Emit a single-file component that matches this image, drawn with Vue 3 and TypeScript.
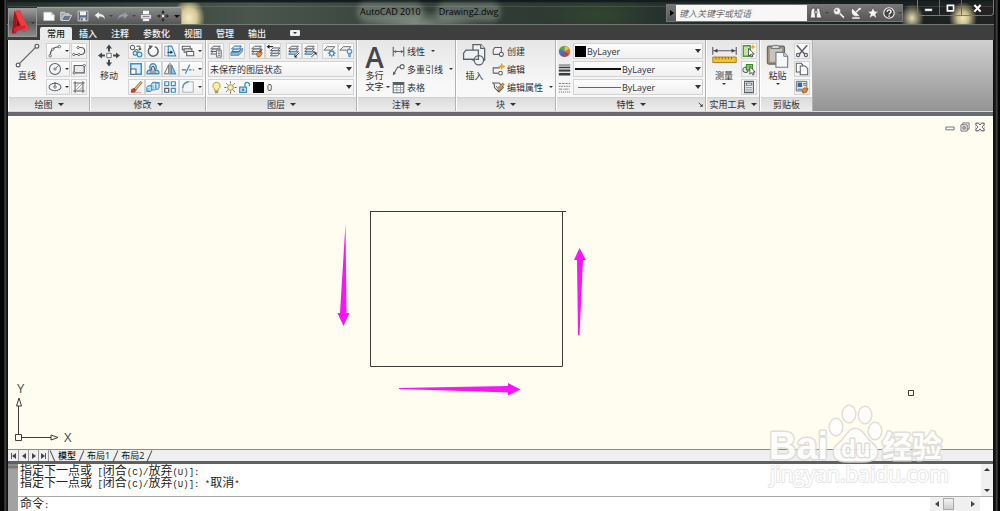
<script setup lang="ts">
import { h, ref } from 'vue'

const G = '#5b6066'
const B = '#3f8fc6'

const layers = (c: string) =>
  `<g fill="#eef1f3" stroke="${c}" stroke-width="1.1"><path d="M2 11.5h8l3-3H5z"/><path d="M2 8.500h8l3-3H5z"/><path d="M2 5.500h8l3-3H5z"/></g>`

const icons: Record<string, string> = {
  line: `<g stroke="${G}" stroke-width=".8" fill="#fff"><path d="M2 14 14 2"/><circle cx="2" cy="14" r="1.200"/><circle cx="14" cy="2" r="1.200"/></g>`,
  arc: `<path d="M2.500 13.500C2.500 7 6 3.500 12.500 3" fill="none" stroke="${G}" stroke-width="1.300"/><g fill="#fff" stroke="${G}"><circle cx="2.500" cy="13.500" r="1.400"/><circle cx="5.500" cy="6" r="1.300"/><circle cx="13" cy="3" r="1.400"/></g>`,
  circle: `<circle cx="8" cy="8" r="6.300" fill="#f4f5f6" stroke="${G}" stroke-width="1.200"/><path d="M8 8l4-4" stroke="${G}"/><circle cx="8" cy="8" r="1.300" fill="#fff" stroke="${G}"/>`,
  ellipse: `<ellipse cx="8" cy="8" rx="6.800" ry="4.200" fill="#f4f5f6" stroke="${G}" stroke-width="1.200"/><path d="M8 8V3" stroke="${G}"/><circle cx="8" cy="8" r="1.400" fill="#fff" stroke="${G}"/><circle cx="8" cy="3.500" r="1" fill="${G}"/>`,
  polyline: `<path d="M2 12h8.500a4 4 0 0 0 0-8H7" fill="none" stroke="${G}" stroke-width="1.400"/><g fill="#fff" stroke="${G}"><circle cx="2" cy="12" r="1.300"/><circle cx="8" cy="12" r="1.300"/><circle cx="7" cy="4" r="1.300"/></g>`,
  rect: `<path d="M2.500 4h11.500v8.500H2.500z" fill="#e8eaec" stroke="${G}" stroke-width="1.300"/><g fill="#fff" stroke="${G}"><circle cx="2.500" cy="12.500" r="1.300"/><circle cx="14" cy="4" r="1.300"/></g>`,
  hatch: `<path d="M3.500 1.500v13M12.500 1.500v13M1.500 3.500h13M1.500 12.500h13" stroke="${G}" stroke-width="1.200"/><path d="M4 8l4-4M4 12l8-8M8 12l4-4" stroke="#8c9297" stroke-width="1"/>`,
  move: `<path d="M8 0l2.200 2.900H8.700V5H7.300V2.900H5.800zM8 16l2.200-2.900H8.700V11H7.300v2.100H5.800zM0 8l2.900 2.200V8.700H5V7.300H2.900V5.800zM16 8l-2.900 2.200V8.700H11V7.300h2.100V5.800z" fill="#41464b"/><path d="M6.400 6.400h3.200v3.200H6.400z" fill="#fff" stroke="#6a6f74" stroke-width=".7"/>`,
  copy: `<g fill="#f6f7f8" stroke="${G}" stroke-width="1.200"><circle cx="4" cy="4" r="2.500"/><circle cx="8.500" cy="8.300" r="2"/></g><g fill="#dff0fb" stroke="${B}" stroke-width="1.400"><circle cx="7" cy="10.500" r="2.200"/><circle cx="12" cy="12" r="2.700"/></g><path d="M8.500 2.500h4v3" fill="none" stroke="#333"/><path d="M10.500 5h4l-2 2.500z" fill="#333"/>`,
  rotate: `<path d="M5.200 3.600A5.600 5.600 0 1 0 10 3" fill="none" stroke="${G}" stroke-width="1.700"/><path d="M3 1.500l5 .5-3 4z" fill="${G}"/>`,
  stretch: `<path d="M2 2.500h5v11H2z" fill="#f4f5f6" stroke="#9a9ea2"/><path d="M6 2.500h4l4.500 11H6z" fill="#d9ecf8" stroke="${B}" stroke-width="1.300"/><path d="M5 9.500h5" stroke="#222"/><path d="M8.500 7.500l3 2-3 2z" fill="#222"/>`,
  array2: `<g stroke="${G}" stroke-width="1.200"><path d="M1.500 2.500h9v4h-9z" fill="#f2f3f4"/><path d="M3.500 5.500h9v4h-9z" fill="#d4d7da"/><path d="M6.500 8.500h8v5h-8z" fill="#f6f7f8"/></g>`,
  scale: `<path d="M2 2h12v12H2z" fill="#d9ecf8" stroke="${B}" stroke-width="1.700"/><path d="M2 8h6v6H2z" fill="#fff" stroke="${G}" stroke-width="1.200"/>`,
  offset: `<path d="M1.500 13.500c-1-3 1-4.500 3.500-4C3.500 5 5 2 8 2s4.500 3 3 7.500c2.500-.5 4.500 1 3.500 4z" fill="#d9ecf8" stroke="${B}" stroke-width="1.600"/><path d="M4 11.500h8M7 10C5.500 7 6.500 5 8 5s2.500 2 1 5" fill="none" stroke="${G}" stroke-width="1.200"/>`,
  mirror: `<path d="M6.500 3v10.500h-5z" fill="#f0f1f2" stroke="${G}"/><path d="M9.500 3v10.500h5z" fill="#8fc4e8" stroke="${B}" stroke-width="1.300"/><path d="M8 1v14" stroke="${G}"/>`,
  trim: `<path d="M1 9h5" stroke="${G}" stroke-width="1.300"/><path d="M9 9h6" stroke="${B}" stroke-width="1.500" stroke-dasharray="3 1.500"/><path d="M5 13.500 10 3" stroke="${B}" stroke-width="1.400"/>`,
  erase: `<path d="M6 10 13.500 1.500l1.500 1.500-7 8.500z" fill="#e3bd7d" stroke="#6b4d22" stroke-width=".8"/><path d="M2.500 10.500l3-1.500 3 2.500-2 3H2z" fill="#c5422b"/><path d="M7 14.500h7" stroke="#d79a88"/>`,
  explode: `<g fill="#9fd0f0" stroke="${B}" stroke-width="1.200"><path d="M1 8.500l2-2h3.500v4.500l-1.500 2H1z"/><path d="M6 5l2-2.500h3.500v7l-1.500 2H6z"/><path d="M11 5l1.500-2H15v5.500l-1.500 2H11z"/></g><path d="M1.500 8.500h3.500v4M6.500 5h3.500v6M11 5h2.500v5" fill="none" stroke="#eaf5fc" stroke-width=".9"/>`,
  array: `<g fill="#f7f8f9" stroke-width="1.400"><path d="M2 9.500h4.500V14H2z" stroke="${G}"/><path d="M2 2h4.500v4.500H2zM9.500 2H14v4.500H9.500zM9.500 9.500H14V14H9.500z" stroke="${B}"/></g>`,
  fillet: `<path d="M2 14V9C2 5 5 2 9 2h5v12z" fill="#f4f5f6"/><path d="M2 9C2 5 5 2 9 2" fill="none" stroke="${B}" stroke-width="1.600"/><path d="M2 9v5h12M9 2h5v12" fill="none" stroke="#a4a8ac"/>`,
  layerProps: layers(G) + `<path d="M8.500 7H14v8H8.500z" fill="#fff" stroke="${G}"/><path d="M10 9h3M10 11h3M10 13h3" stroke="${G}"/>`,
  layerCurrent: layers(G) + `<path d="M2 5.500h8l3-3H5z" fill="#d9ecf8" stroke="${B}"/><path d="M1 9.500h9l4.500-5v3.500l-4.500 5H1z" fill="#7dbbe6" stroke="#2f6f9f" stroke-width=".7"/>`,
  layerMatch: layers(G) + `<path d="M7 11l3-2 4 1-2 4-3 1z" fill="#e8962e" stroke="#8a4b16" stroke-width=".8"/><path d="M11 9l3-3" stroke="#8a4b16" stroke-width="1.500"/>`,
  layerPrev: `<g transform="translate(3 2)">${layers(G)}</g><path d="M2 3h6" stroke="#222" stroke-width="1.300"/><path d="M4 .5v5L.500 3z" fill="#222"/>`,
  layerIso: layers(G) + `<path d="M2 11.500h8l3-3H5z" fill="#9fd0f0" stroke="${B}"/><path d="M14 10l-4 4" stroke="#222"/><path d="M8.500 12v3.500H12z" fill="#222"/>`,
  layerUniso: layers(G) + `<path d="M2 11.500h8l3-3H5z" fill="#9fd0f0" stroke="${B}"/><path d="M9.500 15l4-4" stroke="#222"/><path d="M12 9.500h3.500V13z" fill="#222"/>`,
  layerFreeze: `<path d="M1 7h9l3.500-4H5z" fill="#eef1f3" stroke="${G}"/><g stroke="${B}" stroke-width="1.300" fill="#fff"><circle cx="10" cy="10.500" r="2.400"/><path d="M10 6v2M10 13v2M5.500 10.500h2M12.500 10.500h2M7 7.500l1.300 1.300M11.800 12.300l1.300 1.300M13 7.500l-1.300 1.300M8.200 12.300 7 13.600"/></g>`,
  layerOff: `<path d="M1 7h9l3.500-4H5z" fill="#eef1f3" stroke="${G}"/><circle cx="12" cy="8.500" r="2.600" fill="#d6ebfa" stroke="${B}" stroke-width="1.200"/><path d="M11 11h2v3.500h-2z" fill="#7dbbe6" stroke="${B}" stroke-width=".8"/>`,
  bulb: `<path d="M8 1.500a4.500 4.500 0 0 0-2.200 8.400V12h4.400V9.900A4.500 4.500 0 0 0 8 1.500z" fill="#fdf0a0" stroke="#a98a2c"/><path d="M6 12.500h4v2.500H6z" fill="#8b8f94"/>`,
  sun: `<circle cx="8" cy="8" r="3.500" fill="#fdf0a0" stroke="#8f7630"/><g stroke="#6f6440" stroke-width="1.200"><path d="M8 .5v2.500M8 13v2.500M.5 8H3M13 8h2.500M2.700 2.700l1.800 1.800M11.500 11.500l1.800 1.800M13.300 2.700l-1.800 1.800M4.500 11.500l-1.800 1.800"/></g>`,
  lock: `<path d="M8.500 8V4.500a2.800 2.800 0 0 1 5.600 0V6" fill="none" stroke="${B}" stroke-width="1.600"/><path d="M2 7.500h8.500V14H2z" fill="#b8dcf3" stroke="${B}" stroke-width="1.400"/><path d="M6.200 9.500v2.500" stroke="#222" stroke-width="1.500"/>`,
  dim: `<path d="M1.500 2v12M14.500 2v12M2 8h12" stroke="${G}" stroke-width="1.300" fill="none"/><path d="M2 8l3-2v4zM14 8l-3-2v4z" fill="${G}"/>`,
  leader: `<path d="M2.500 13 7 5h3" fill="none" stroke="${G}" stroke-width="1.400"/><path d="M1 15.500l.500-5 3.500 2z" fill="${G}"/><circle cx="12.500" cy="4.500" r="2.500" fill="#fff" stroke="${G}" stroke-width="1.300"/>`,
  table: `<path d="M1.500 2h13v12.500h-13z" fill="#fff" stroke="${G}" stroke-width="1.300"/><path d="M1.500 2h13v3h-13z" fill="${G}"/><path d="M1.500 8h13M1.500 11h13M6 5v9.500M10.500 5v9.500" stroke="#8c9297"/>`,
  insert: `<g fill="#eef0f2" stroke="${G}" stroke-width=".8"><path d="M7 1h5l2.500 2.500V11H7z"/><path d="M12 1v2.500h2.500" fill="#fff"/><path d="M1 10.500v-4l1.500-2h8v6z"/><circle cx="10.800" cy="11" r="3"/></g><path d="M1 10.500h7M10.500 8v2.500h-2" stroke="${G}" stroke-width=".8" fill="none"/>`,
  create: `<path d="M1.500 11.500v-5.500l2-3h8v7.500" fill="#f2f3f4" stroke="${G}" stroke-width="1.300"/><path d="M1.500 11.500h7" stroke="${G}" stroke-width="1.500"/><circle cx="11.500" cy="11.500" r="2.500" fill="#fff" stroke="${G}" stroke-width="1.300"/>`,
  edit: `<path d="M1.500 12.500V6h8" fill="#f2f3f4" stroke="${G}" stroke-width="1.300"/><path d="M1.500 12.500h6" stroke="${G}" stroke-width="1.500"/><circle cx="10.500" cy="12.500" r="2.300" fill="#fff" stroke="${G}" stroke-width="1.300"/><path d="M12 .500l1.200 2.500 2.600 1.200-2.600 1.200L12 8l-1.200-2.600L8.200 4.200l2.600-1.200z" fill="#f5a623" stroke="#d9821a" stroke-width=".5"/>`,
  attr: `<path d="M1 2.500h8L14 8l-5.500 5.500L3 8V4.500z" fill="#f2f3f4" stroke="${G}" stroke-width="1.300"/><path d="M5 6l2 3 2-3" fill="none" stroke="${G}"/><path d="M7.500 10.500 13 2.500l2 1.500-5.500 7.500-2.500 1z" fill="#efa83e" stroke="#7d4d16" stroke-width=".8"/>`,
  wheel: `<circle cx="8" cy="8" r="7" fill="#888"/><path d="M8 8V1.500A6.500 6.500 0 0 1 13.600 4.800z" fill="#f2c43a"/><path d="M8 8l5.600-3.200a6.500 6.500 0 0 1 0 6.400z" fill="#e4702f"/><path d="M8 8l5.600 3.200A6.500 6.500 0 0 1 8 14.500z" fill="#c93a3a"/><path d="M8 8v6.500a6.500 6.500 0 0 1-5.600-3.300z" fill="#7b4fa8"/><path d="M8 8l-5.600 3.200a6.500 6.500 0 0 1 0-6.400z" fill="#3c78c8"/><path d="M8 8 2.400 4.800A6.500 6.500 0 0 1 8 1.500z" fill="#58a744"/>`,
  weight: `<path d="M1 2.500h14" stroke="#3a3d42" stroke-width="1"/><path d="M1 5.500h14" stroke="#3a3d42" stroke-width="2"/><path d="M1 9.300h14" stroke="#3a3d42" stroke-width="2.600"/><path d="M1 13.800h14" stroke="#3a3d42" stroke-width="3.200"/>`,
  ltype: `<g stroke="#777b80" stroke-width="1.200"><path d="M1 3h14" stroke-dasharray="3 1"/><path d="M1 6.500h14" stroke-dasharray="2 1"/><path d="M1 10h14" stroke-dasharray="4 1 1 1"/><path d="M1 13.500h14" stroke-dasharray="1.500 1"/></g>`,
  measure: `<path d="M.5 2.500v5M15.500 2.500v5M1 5h14" stroke="#555a60" stroke-width=".7"/><path d="M1 5l2.500-1.300v2.600zM15 5l-2.500-1.300v2.600z" fill="#444"/><path d="M.5 9h15v3.500H.5z" fill="#f3c233" stroke="#a87c13" stroke-width=".6"/><path d="M2.500 9v1.500M4.500 9v1.500M6.500 9v1.500M8.500 9v1.500M10.500 9v1.500M12.500 9v1.500" stroke="#7d5c10" stroke-width=".5"/>`,
  qselect: `<path d="M1.500 2h8v12h-8z" fill="#bfe3a9" stroke="#4d9a3a" stroke-width="1.500"/><path d="M7.500 5v9l2-2 1.500 3 1.500-1-1.500-2.500H14z" fill="#fff" stroke="#444"/><path d="M12.500 0l1 2.300L15.800 3.300l-2.300 1-1 2.300-1-2.300-2.300-1 2.300-1z" fill="#f5a623"/>`,
  select: `<circle cx="4" cy="9" r="3" fill="#e8f3e2" stroke="${G}" stroke-width="1.200"/><path d="M5 3h7v6H5z" fill="#8fce74" stroke="#3f8a2e" stroke-width="1.300"/><path d="M9 5v9l2-2 1.500 3 1.500-1-1.500-2.500H15z" fill="#fff" stroke="#444"/>`,
  calc: `<path d="M3 1.500h10v13H3z" fill="#f2f3f4" stroke="${G}" stroke-width="1.300"/><path d="M5 3.500h6v2.500H5z" fill="#fff" stroke="${G}"/><path d="M5 8.500h6M5 10.500h6M5 12.500h6" stroke="${G}" stroke-width="1.200" stroke-dasharray="1.300 1"/>`,
  paste: `<rect x="1.500" y="2" width="11" height="11.500" rx="1" fill="#9b9080" stroke="#6a6258" stroke-width=".7"/><path d="M3 3.500h8v8.500H3z" fill="#c9c4ba"/><path d="M4 3.500c0-1.500 1-1 1.500-2h2.500c.5 1 1.500.5 1.500 2z" fill="#d6d8da" stroke="#6a6f74" stroke-width=".6"/><path d="M7 6h5l2.500 2.500v7H7z" fill="#f5f8fb" stroke="#6f7880" stroke-width=".7"/><path d="M12 6v2.500h2.500" fill="#d4dde5" stroke="#6f7880" stroke-width=".6"/>`,
  cut: `<path d="M2 1.500 11.500 12M14 1.500 4.500 12" stroke="${G}" stroke-width="1.700"/><g fill="#fff" stroke="${G}" stroke-width="1.400"><circle cx="3.500" cy="12.500" r="1.800"/><circle cx="12.500" cy="12.500" r="1.800"/></g>`,
  copyclip: `<path d="M1.500 1.500h5.500l2 2v8H1.500z" fill="#fff" stroke="${G}" stroke-width="1.200"/><path d="M6 4.500h5.500l3 3v7H6z" fill="#fff" stroke="${G}" stroke-width="1.200"/>`,
  match: `<path d="M1.500 1.500h12v11h-12z" fill="#dfe6ee" stroke="${G}"/><path d="M3 3h5v5H3z" fill="#2d6da3"/><path d="M9.500 4h3M9.500 6h3M3 10.500h5" stroke="${G}"/><path d="M8 11l3-2 4 1-2 4-4 1z" fill="#e8862e" stroke="#8a4b16" stroke-width=".8"/>`,
  new: `<path d="M1 3h10l4 4v7H1z" fill="#fafafa" stroke="#d2d2d2" stroke-width=".8"/><path d="M11 3v4h4z" fill="#bfc3c7"/>`,
  open: `<path d="M1 14V3h5l1 2h5v2" fill="#9ea6ae" stroke="#e3e6e9" stroke-width="1.100"/><path d="M2 14l3-7h10.500l-3.500 7z" fill="#6d7782" stroke="#e3e6e9" stroke-width="1.100"/>`,
  save: `<path d="M1.500 1.500h13v13h-13z" fill="#5d6e80" stroke="#e0e4e8"/><path d="M4 2h8v5H4z" fill="#f2f2f2"/><path d="M4.500 10h7v4.500h-7z" fill="#d5d9dd"/><path d="M5.500 11h2v3h-2z" fill="#4a5663"/>`,
  undo: `<path d="M7 1.500v3.300c5 0 8 2.700 8 8.700-1.500-3.500-4-4.500-8-4.500v3.500L.500 7z" fill="#eceff2" stroke="#575b60" stroke-width=".7"/>`,
  redo: `<path d="M9 1.500v3.300c-5 0-8 2.700-8 8.700 1.500-3.500 4-4.500 8-4.500v3.500L15.500 7z" fill="#9c9fa2" stroke="#66696c" stroke-width=".7"/>`,
  print: `<path d="M4 1h8v5H4z" fill="#fff"/><path d="M1 6h14v6H1z" fill="#e6e8ea" stroke="#5a5d60" stroke-width=".6"/><path d="M3.500 8.500h9" stroke="#555"/><path d="M3.500 11h9v4h-9z" fill="#fff" stroke="#666" stroke-width=".7"/>`,
  pan: `<path d="M8 0l2.500 3.500h-1.700V6H7.200V3.500H5.500zM8 16l2.500-3.500h-1.700V10H7.200v2.500H5.500zM0 8l3.500 2.500V8.800H6V7.200H3.500V5.500zM16 8l-3.500 2.500V8.800H10V7.200h2.500V5.500z" fill="#26292c"/><path d="M6.500 6.500h3v3h-3z" fill="#eee"/>`,
  find: `<path d="M3 1.500h3.500v3.500l1 9.500H.5l1-9.500zM9.500 1.500H13v3.500l2.500 9.500H8.500V5z" fill="#f4f4f4" stroke="#333" stroke-width=".8"/><path d="M6.500 5h3v4h-3z" fill="#d0d0d0" stroke="#333" stroke-width=".6"/>`,
  key: `<path d="M7 8.500l7 7 1.500-2.500L9 6.500z" fill="#eee" stroke="#333" stroke-width=".5"/><circle cx="5.500" cy="5.500" r="4.700" fill="#f2f2f2" stroke="#333" stroke-width=".5"/><circle cx="4.500" cy="4.500" r="1.300" fill="#555"/>`,
  dish: `<path d="M3 1.500l10 10c-4 2-8 1-10-2s-1-6 0-8z" fill="#f4f4f4" stroke="#333" stroke-width=".6"/><path d="M8 7l5-5M3 14.500h10" stroke="#f4f4f4" stroke-width="2"/><circle cx="13" cy="2.500" r="1.500" fill="#f4f4f4"/>`,
  star: `<path d="M8 .5l2.300 5.200h5.400l-4.300 3.500L13 15.300 8 11.800l-5 3.500 1.600-6.100L.3 5.700h5.400z" fill="#f4f4f4" stroke="#333" stroke-width=".6"/>`,
  help: `<circle cx="8" cy="8" r="7" fill="#444" stroke="#f4f4f4" stroke-width="1.500"/><path d="M5.500 6.200C5.500 3 10.700 3 10.700 6.200 10.700 8 8.200 8 8.200 10" fill="none" stroke="#fff" stroke-width="1.900"/><circle cx="8.200" cy="12.200" r="1.100" fill="#fff"/>`,
  minimize: `<path d="M2.500 8h11v4h-11z" fill="#fff" stroke="#222" stroke-width=".8"/>`,
  maximize: `<path d="M3.500 3.500h9v8h-9z" fill="none" stroke="#222" stroke-width="4"/><path d="M3.500 3.500h9v8h-9z" fill="none" stroke="#fff" stroke-width="2.500"/>`,
  close: `<path d="M3.500 3l9 9.500M12.500 3l-9 9.500" stroke="#fff" stroke-width="3"/>`,
  docMin: `<path d="M1.500 8h13v4.500h-13z" fill="#fff" stroke="#666" stroke-width="1.400"/>`,
  docRestore: `<path d="M4.500 1.500h10v10h-10z" fill="#fff" stroke="#666" stroke-width="1.400"/><path d="M1.500 4.500h10v10h-10z" fill="#fff" stroke="#666" stroke-width="1.400"/><path d="M4.500 7.500h4v4h-4z" fill="#ccc" stroke="#666" stroke-width="1.300"/>`,
  docClose: `<path d="M1 1.500h14v13H1z" fill="none" stroke="#999" stroke-width=".8"/><path d="M1.500 2h3.800L8 5l2.700-3h3.800v2.500L11 8l3.500 3.500V14h-3.800L8 11l-2.700 3H1.500v-2.500L5 8 1.500 4.500z" fill="#fff" stroke="#555" stroke-width="1.500"/>`,
  launcher: `<path d="M4 4l7 7" stroke="#333" stroke-width="2"/><path d="M13 6v7H6z" fill="#333"/>`,
}

const Icon = (p: { name: string }) =>
  h('svg', { class: 'icon', viewBox: '0 0 16 16', 'aria-hidden': 'true', innerHTML: icons[p.name] })

interface Tool { icon: string; label: string; menu?: boolean }
const t = (icon: string, label: string, menu = false): Tool => ({ icon, label, menu })

const tabs = ['常用', '插入', '注释', '参数化', '视图', '管理', '输出']
const activeTab = ref('常用')

const quick: Tool[] = [
  t('new', '新建'), t('open', '打开'), t('save', '保存'), t('undo', '放弃', true),
  t('redo', '重做', true), t('print', '打印'), t('pan', '平移'),
]
const infoTools: Tool[] = [
  t('find', '搜索', true), t('key', '速博应用中心'), t('dish', '通讯中心'), t('star', '收藏夹'), t('help', '帮助', true),
]
const drawLeft = [t('arc', '圆弧', true), t('circle', '圆', true), t('ellipse', '椭圆', true)]
const drawRight = [t('polyline', '多段线'), t('rect', '矩形'), t('hatch', '图案填充')]
const modifyGrid = [
  t('copy', '复制'), t('rotate', '旋转'), t('stretch', '拉伸'),
  t('scale', '缩放'), t('offset', '偏移'), t('mirror', '镜像'),
  t('erase', '删除'), t('explode', '分解'), t('array', '阵列'),
]
const modifyRight = [t('array2', '前置', true), t('trim', '修剪', true), t('fillet', '圆角', true)]
const layerGroups = [
  [t('layerProps', '图层特性')], [t('layerCurrent', '置为当前')],
  [t('layerMatch', '匹配'), t('layerPrev', '上一个')],
  [t('layerIso', '隔离'), t('layerUniso', '取消隔离')],
  [t('layerFreeze', '冻结'), t('layerOff', '关闭')],
]
const annotate = [t('dim', '线性', true), t('leader', '多重引线', true), t('table', '表格')]
const block = [t('create', '创建'), t('edit', '编辑'), t('attr', '编辑属性', true)]
const utils = [t('qselect', '快速选择'), t('select', '全部选择'), t('calc', '计算器')]
const clip = [t('cut', '剪切'), t('copyclip', '复制'), t('match', '特性匹配')]

const layouts = ['模型', '布局1', '布局2']
const activeLayout = ref('模型')
const command = ref('')
</script>

<template>
  <div class="window">
    <header class="head">
      <div class="caption">
        <div class="quick">
          <button v-for="q in quick" :key="q.icon" :class="['flat', { wide: q.menu }]" :aria-label="q.label">
            <Icon :name="q.icon" /><i v-if="q.menu" class="caret dim"></i>
          </button>
          <button class="flat more" aria-label="自定义"><i class="caret big"></i></button>
        </div>
        <h1 class="title"><span>AutoCAD 2010</span><span>Drawing2.dwg</span></h1>
        <div class="info">
          <button class="play" aria-label="展开"><i class="tri-right"></i></button>
          <input class="search" type="text" placeholder="键入关键字或短语" aria-label="键入关键字或短语" />
          <button v-for="q in infoTools" :key="q.icon" :class="['flat', { wide: q.menu }]" :aria-label="q.label">
            <Icon :name="q.icon" /><i v-if="q.menu" class="caret dim"></i>
          </button>
        </div>
        <div class="winctl">
          <button aria-label="最小化"><Icon name="minimize" /></button>
          <button aria-label="最大化"><Icon name="maximize" /></button>
          <button class="x" aria-label="关闭"><Icon name="close" /></button>
        </div>
      </div>
      <nav class="tabs">
        <button v-for="n in tabs" :key="n" :class="['tab', { on: n === activeTab }]" @click="activeTab = n">{{ n }}</button>
        <button class="pill" aria-label="最小化功能区"><i class="caret"></i></button>
      </nav>
      <button class="app" aria-label="应用程序菜单">
        <svg class="logo" viewBox="0 0 20 25" aria-hidden="true">
          <path d="M4.500 1 10 .5 18.500 19 14 22 12.500 19 7 21 6 23.500 2 23.500z" fill="#cf1f28" />
          <path d="M4.500 1 7 4 5.500 22 2 23.500z" fill="#a3131c" />
          <path d="M4.500 1 10 .5 18.500 19 14 22z" fill="#ee3f43" />
          <path d="M7 9l3 6-3.500 1.500z" fill="#6a0c13" />
          <path d="M4 18l11-3 1 3-12 4z" fill="#d8262e" />
        </svg>
        <i class="caret"></i>
      </button>
    </header>

    <section class="ribbon">
      <div class="panel draw">
        <div class="body">
          <button class="large"><Icon name="line" /><span>直线</span></button>
          <div class="col">
            <button v-for="q in drawLeft" :key="q.icon" class="tool split" :aria-label="q.label"><Icon :name="q.icon" /><i class="caret"></i></button>
          </div>
          <div class="col">
            <button v-for="q in drawRight" :key="q.icon" class="tool" :aria-label="q.label"><Icon :name="q.icon" /></button>
          </div>
        </div>
        <button class="foot">绘图<i class="caret big"></i></button>
      </div>

      <div class="panel modify">
        <div class="body">
          <button class="large"><Icon name="move" /><span>移动</span></button>
          <div class="grid3">
            <button v-for="q in modifyGrid" :key="q.icon" class="tool" :aria-label="q.label"><Icon :name="q.icon" /></button>
          </div>
          <div class="col">
            <button v-for="q in modifyRight" :key="q.icon" class="tool split" :aria-label="q.label"><Icon :name="q.icon" /><i class="caret"></i></button>
          </div>
        </div>
        <button class="foot">修改<i class="caret big"></i></button>
      </div>

      <div class="panel layer">
        <div class="body stack">
          <div class="groups">
            <div v-for="(g, i) in layerGroups" :key="i" class="group">
              <button v-for="q in g" :key="q.icon" class="tool" :aria-label="q.label"><Icon :name="q.icon" /></button>
            </div>
          </div>
          <div class="combo">
            <select aria-label="图层状态"><option>未保存的图层状态</option></select>
          </div>
          <div class="combo">
            <span class="deco"><Icon name="bulb" /><Icon name="sun" /><Icon name="lock" /><b class="swatch"></b></span>
            <select class="pad-layer" aria-label="图层"><option>0</option></select>
          </div>
        </div>
        <button class="foot">图层<i class="caret big"></i></button>
      </div>

      <div class="panel annot">
        <div class="body">
          <button class="large text"><b class="letter">A</b><span>多行</span><span class="two">文字<i class="caret"></i></span></button>
          <div class="col">
            <button v-for="q in annotate" :key="q.icon" class="row"><Icon :name="q.icon" />{{ q.label }}<i v-if="q.menu" class="caret"></i></button>
          </div>
        </div>
        <button class="foot">注释<i class="caret big"></i></button>
      </div>

      <div class="panel block">
        <div class="body">
          <button class="large"><Icon name="insert" /><span>插入</span></button>
          <div class="col">
            <button v-for="q in block" :key="q.icon" class="row"><Icon :name="q.icon" />{{ q.label }}<i v-if="q.menu" class="caret"></i></button>
          </div>
        </div>
        <button class="foot">块<i class="caret big"></i></button>
      </div>

      <div class="panel props">
        <div class="body stack">
          <div class="prop">
            <Icon name="wheel" />
            <div class="combo">
              <span class="deco"><b class="swatch"></b></span>
              <select class="pad-color" aria-label="颜色"><option>ByLayer</option></select>
            </div>
          </div>
          <div class="prop">
            <Icon name="weight" />
            <div class="combo">
              <span class="deco"><b class="stroke"></b></span>
              <select class="pad-line" aria-label="线宽"><option>ByLayer</option></select>
            </div>
          </div>
          <div class="prop">
            <Icon name="ltype" />
            <div class="combo">
              <span class="deco"><b class="stroke thin"></b></span>
              <select class="pad-line" aria-label="线型"><option>ByLayer</option></select>
            </div>
          </div>
        </div>
        <div class="foot">特性<i class="caret big"></i><button class="launch" aria-label="特性选项板"><Icon name="launcher" /></button></div>
      </div>

      <div class="panel util">
        <div class="body">
          <button class="large"><Icon name="measure" /><span>测量</span><i class="caret"></i></button>
          <div class="col">
            <button v-for="q in utils" :key="q.icon" class="tool" :aria-label="q.label"><Icon :name="q.icon" /></button>
          </div>
        </div>
        <button class="foot">实用工具<i class="caret big"></i></button>
      </div>

      <div class="panel clip">
        <div class="body">
          <button class="large"><Icon name="paste" /><span>粘贴</span><i class="caret"></i></button>
          <div class="col">
            <button v-for="q in clip" :key="q.icon" class="tool" :aria-label="q.label"><Icon :name="q.icon" /></button>
          </div>
        </div>
        <button class="foot">剪贴板</button>
      </div>
    </section>

    <main class="canvas">
      <svg class="drawing" role="img" aria-label="图形">
        <g fill="none" stroke="#3c3c38">
          <path d="M362.500 94.500V249.500H554.500V94.500M362 94.500H558" />
          <path d="M7.500 317.500h6v6h-6zM10.500 317V289M14 320.500h29" />
          <path d="M8.500 289h5l-2.500-8zM43 318v5l7-2.500z" />
          <path d="M900.500 273.500h5v5h-5z" />
        </g>
        <g fill="#f914f9">
          <path d="M337.500 107 338.500 196H341.500L335.500 209 329.500 196H332z" />
          <path d="M571.500 131 578 143H575L571.500 218H570L569 143H566z" />
          <path d="M391 271 500 269V266L512.500 272.500 500 278.500V275.500L391 272z" />
        </g>
        <g class="axis"><text x="9" y="276">Y</text><text x="56" y="325">X</text></g>
      </svg>
      <div class="docctl">
        <button aria-label="最小化图形"><Icon name="docMin" /></button>
        <button aria-label="还原图形"><Icon name="docRestore" /></button>
        <button aria-label="关闭图形"><Icon name="docClose" /></button>
      </div>
    </main>

    <nav class="layouts">
      <div class="steps">
        <button aria-label="第一个"><i class="bar"></i><i class="tri-left"></i></button>
        <button aria-label="上一个"><i class="tri-left"></i></button>
        <button aria-label="下一个"><i class="tri-right"></i></button>
        <button aria-label="最后一个"><i class="tri-right"></i><i class="bar"></i></button>
      </div>
      <button v-for="l in layouts" :key="l" :class="['sheet', { on: l === activeLayout }]" @click="activeLayout = l">{{ l }}</button>
    </nav>

    <section class="console">
      <div class="grip"></div>
      <div class="lines">
        <div class="history">
          <div class="log">
            <p>指定下一点或<code> [</code>闭合<code>(C)/</code>放弃<code>(U)]:</code></p>
            <p>指定下一点或<code> [</code>闭合<code>(C)/</code>放弃<code>(U)]: *</code>取消<code>*</code></p>
          </div>
          <div class="vbar"><button aria-label="向上"><i class="tri-up"></i></button><button aria-label="向下"><i class="caret big"></i></button></div>
        </div>
        <div class="prompt">
          <label for="cmd">命令<code>:</code></label>
          <input id="cmd" v-model="command" type="text" autocomplete="off" />
          <div class="hbar"><button aria-label="向左"><i class="tri-left"></i></button><b class="thumb"></b><button aria-label="向右"><i class="tri-right"></i></button></div>
        </div>
      </div>
    </section>

    <svg class="mark" viewBox="0 0 184 90" aria-label="Baidu 经验">
      <g fill="#fff" stroke="#dcdbd6" stroke-width="3" paint-order="stroke" stroke-linejoin="round">
        <text class="bai" x="4" y="57">Bai</text>
        <ellipse cx="71" cy="25" rx="6" ry="8" />
        <ellipse cx="84" cy="12" rx="6" ry="8" />
        <ellipse cx="100" cy="13" rx="6" ry="8" />
        <ellipse cx="110" cy="29" rx="6" ry="8" />
        <path d="M90 27c7 0 9 7 14 12 6 5 9 8 8 13-1 6-7 8-22 7-15 1-20-1-21-7-1-5 2-8 8-13 5-5 7-12 13-12z" />
        <text class="du" x="76" y="55">du</text>
        <text class="exp" x="117" y="55">经验</text>
      </g>
      <g fill="#fff" stroke="#e4e4e2" stroke-width="2" paint-order="stroke" stroke-linejoin="round">
        <text class="url" x="5" y="80">jingyan.baidu.com</text>
      </g>
    </svg>
  </div>
</template>

<style>
html,
body {
  margin: 0;
  background: #000;
}
</style>

<style scoped>
* {
  box-sizing: border-box;
}
.window {
  position: relative;
  display: flex;
  flex-direction: column;
  height: 100vh;
  overflow: hidden;
  padding: 0 7px 0 8px;
  background: linear-gradient(90deg, #050505 0, #050505 4px, #4c4f4e 5px, #111 7px, #111 calc(100% - 5px), #4a4d4c calc(100% - 3px), #050505 calc(100% - 2px));
  font-family: "Open Sans", "Noto Sans CJK SC", sans-serif;
  font-size: 9px;
  line-height: 11px;
  color: #303236;
}
button {
  display: flex;
  align-items: center;
  justify-content: center;
  margin: 0;
  padding: 0;
  border: 0;
  background: none;
  color: inherit;
  font: inherit;
  white-space: nowrap;
}
.icon {
  display: block;
  flex: none;
  width: 14px;
  height: 14px;
}
.caret {
  flex: none;
  width: 0;
  height: 0;
  border: 2px solid transparent;
  border-top-color: #333;
  border-bottom: 0;
}
.caret.big {
  border-width: 3px;
  border-bottom: 0;
}
.caret.dim {
  border-top-color: #444;
}
.tri-right,
.tri-left,
.tri-up {
  width: 0;
  height: 0;
  border: 3px solid transparent;
}
.tri-right {
  border-left: 4px solid #444;
  border-right: 0;
}
.tri-left {
  border-right: 4px solid #444;
  border-left: 0;
}
.tri-up {
  border-bottom-color: #333;
  border-top: 0;
}

/* caption and tabs */
.head {
  position: relative;
  flex: none;
  margin: 0 -1px;
}
.caption {
  display: flex;
  align-items: flex-end;
  height: 25px;
  padding-left: 30px;
  border-bottom: 1px solid #727a76;
  background:
    linear-gradient(#111a1c 0, #18201f 2px, transparent 3px),
    linear-gradient(transparent 6px, rgb(255 255 255 / 12%) 6px, rgb(255 255 255 / 12%) 7px, transparent 7px),
    radial-gradient(ellipse 16px 20px at 182px 18px, #f6edc4 0, #d3c795 50%, transparent 100%),
    radial-gradient(ellipse 60px 14px at 410px 100%, #7d8a7a 0, transparent 100%),
    radial-gradient(ellipse 12px 14px at 905px 18px, #e9deb0 0, transparent 100%),
    radial-gradient(ellipse 14px 16px at 956px 18px, #f3e8bb 0, #c9bd8c 40%, transparent 100%),
    radial-gradient(ellipse 60px 20px at 590px 60%, #32462f 0, transparent 100%),
    linear-gradient(90deg, #23302a 0, #4a564d 25%, #354039 42%, #27332f 65%, #17201f 85%, #222 100%);
}
.quick {
  display: flex;
  align-items: center;
  gap: 3px;
  width: 145px;
  height: 17px;
  padding-left: 5px;
  background: linear-gradient(#8a8a8a, #565656);
  border: 1px solid #a2a2a2;
  border-width: 1px 1px 0 0;
}
.quick .icon {
  width: 12px;
  height: 12px;
}
.flat {
  width: 14px;
  height: 15px;
}
.flat.wide {
  width: 20px;
  gap: 3px;
}
.flat.more {
  width: 8px;
}
.more .caret {
  border-top-color: #111;
}
.title {
  display: flex;
  flex: 1;
  gap: 18px;
  margin: 0;
  padding-left: 178px;
  font-size: 9px;
  font-weight: 400;
  line-height: 14px;
  align-self: center;
  white-space: nowrap;
  color: #050505;
}
.title span {
  border-radius: 6px;
  background: rgb(160 172 162 / 40%);
  box-shadow: 0 0 5px 3px rgb(160 172 162 / 40%);
}
.info {
  display: flex;
  align-items: center;
  gap: 3px;
  height: 18px;
  margin-bottom: 2px;
  border: 1px solid #777;
  background: linear-gradient(#777, #555);
}
.info .icon {
  width: 12px;
  height: 12px;
}
.info .flat.wide {
  width: 19px;
}
.play {
  width: 9px;
  height: 16px;
  margin-right: -3px;
}
.play .tri-right {
  border-left-color: #000;
}
.search {
  width: 131px;
  height: 16px;
  padding: 0 3px;
  border: 0;
  border-radius: 0;
  background: #f7f7f7;
  font: italic 9px/13px "Open Sans", "Noto Sans CJK SC", sans-serif;
  color: #333;
}
.search::placeholder {
  color: #6b6b6b;
  opacity: 1;
}
.winctl {
  display: flex;
  align-self: flex-start;
  width: 77px;
  height: 16px;
  margin-left: 14px;
  border: 1px solid #777b78;
  border-top: 0;
  border-radius: 0 0 4px 4px;
  overflow: hidden;
}
.winctl button {
  width: 22px;
  padding-top: 2px;
  border-right: 1px solid #666a68;
}
.winctl .x {
  flex: 1;
  border: 0;
}
.winctl .icon {
  width: 11px;
  height: 11px;
}
.tabs {
  display: flex;
  align-items: flex-end;
  height: 15px;
  padding-left: 33px;
  background: #3e3e3e;
  color: #f4f4f4;
}
.tab {
  height: 13px;
  padding: 0 7px;
  font-weight: 500;
}
.tab.on {
  border-radius: 2px 2px 0 0;
  background: #ececec;
  color: #222;
}
.pill {
  width: 10px;
  height: 6px;
  margin: 0 0 4px 17px;
  border-radius: 1px;
  background: #e9eef2;
}
.app {
  position: absolute;
  left: 1px;
  top: 8px;
  width: 29px;
  height: 29px;
  border: 1px solid #9a9a9a;
  background: linear-gradient(#9c9c9c, #5c5c5c 50%, #8a8a8a);
  gap: 1px;
}
.logo {
  width: 20px;
  height: 25px;
}

/* ribbon */
.ribbon {
  display: flex;
  flex: none;
  border-bottom: 1px solid #d8d8d8;
  background: linear-gradient(#cfcfcf, #949494);
}
.panel {
  display: flex;
  flex-direction: column;
  border-right: 1px solid #b2b2b2;
  border-left: 1px solid #fff;
  background: linear-gradient(#e6e6e6, #f7f7f7 60%, #fafafa);
}
.draw { width: 82px; }
.modify { width: 116px; }
.layer { width: 151px; }
.annot { width: 99px; }
.block { width: 100px; }
.props { width: 150px; }
.util { width: 54px; }
.clip { width: 53px; }
.body {
  display: flex;
  justify-content: space-between;
  height: 57px;
  padding: 3px 2px 1px 0;
}
.stack {
  flex-direction: column;
  justify-content: flex-start;
  gap: 2px;
  padding-left: 1px;
}
.foot {
  position: relative;
  display: flex;
  align-items: center;
  justify-content: center;
  gap: 5px;
  width: 100%;
  height: 14px;
  border-top: 1px solid #d0d0d0;
  background: linear-gradient(#dcdcdc, #ececec);
}
.launch {
  position: absolute;
  right: 1px;
  top: 3px;
}
.launch .icon {
  width: 7px;
  height: 7px;
}
.large {
  flex-direction: column;
  justify-content: flex-start;
  width: 36px;
  gap: 2px;
}
.large .icon {
  width: 25px;
  height: 25px;
}
.modify .large .icon {
  width: 22px;
}
.large.text {
  gap: 0;
  width: 33px;
}
.letter {
  height: 27px;
  font: 28px/28px "Open Sans", sans-serif;
  font-weight: 600;
  color: #44484d;
}
.two {
  display: flex;
  align-items: center;
  gap: 2px;
  margin-left: 6px;
}
.col {
  display: flex;
  flex-direction: column;
  gap: 2px;
}
.grid3 {
  display: grid;
  grid-template-columns: repeat(3, 17px);
  grid-auto-rows: 16px;
  gap: 2px 0;
}
.tool {
  width: 16px;
  height: 16px;
  border: 1px solid #d3d3d3;
  background: linear-gradient(#fdfdfd, #efefef);
}
.grid3 .tool {
  width: 17px;
}
.split {
  width: 24px;
  gap: 3px;
}
.groups {
  display: flex;
  justify-content: space-between;
}
.group {
  display: flex;
}
.row {
  justify-content: flex-start;
  height: 16px;
  gap: 2px;
}
.row .icon {
  width: 13px;
  height: 13px;
}
.row .caret {
  margin-left: 4px;
}
.annot .col {
  width: 61px;
}
.block .col {
  width: 61px;
}
.combo {
  position: relative;
  flex: 1;
  display: flex;
  align-items: center;
  max-height: 16px;
}
.combo::after {
  content: "";
  position: absolute;
  right: 2px;
  top: 6px;
  border: 3px solid transparent;
  border-top: 4px solid #333;
  border-bottom: 0;
  pointer-events: none;
}
.combo select {
  appearance: none;
  width: 100%;
  height: 16px;
  margin: 0;
  padding: 0 10px 0 1px;
  border: 1px solid #d3d3d3;
  border-radius: 0;
  background: linear-gradient(#fdfdfd, #f0f0f0);
  color: #303236;
  font: inherit;
  font-size: 9px;
}
.combo .pad-layer {
  padding-left: 58px;
}
.combo .pad-color {
  padding-left: 13px;
}
.combo .pad-line {
  padding-left: 48px;
}
.deco {
  position: absolute;
  left: 2px;
  display: flex;
  align-items: center;
  gap: 1px;
  pointer-events: none;
}
.deco .icon {
  width: 13px;
  height: 13px;
}
.swatch {
  width: 11px;
  height: 11px;
  background: #000;
}
.layer .swatch {
  margin-left: 1px;
}
.stroke {
  width: 46px;
  height: 2px;
  background: #111;
}
.stroke.thin {
  width: 43px;
  height: 1px;
  margin-left: 3px;
  background: #666;
}
.prop {
  display: flex;
  align-items: center;
  gap: 2px;
  height: 16px;
}
.prop .icon {
  width: 13px;
  height: 13px;
}

/* drawing area */
.canvas {
  position: relative;
  flex: 1;
  min-height: 0;
  border-top: 4px solid #68696a;
  background: #fffcf0;
  box-shadow: inset 0 2px 0 #fff;
}
.drawing {
  position: absolute;
  left: 0;
  top: 1px;
  width: 100%;
  height: 100%;
}
.axis text {
  font: 13px "Open Sans", sans-serif;
  fill: #4a4a46;
}
.docctl {
  position: absolute;
  right: 8px;
  top: 6px;
  display: flex;
  gap: 5px;
}
.docctl .icon {
  width: 10px;
  height: 10px;
}
.layouts {
  display: flex;
  flex: none;
  height: 12px;
  border-top: 1px solid #8a8a8a;
  background: #efefef;
}
.steps {
  display: flex;
  padding-left: 1px;
}
.steps button {
  width: 10px;
  height: 11px;
  border-right: 1px solid #999;
}
.bar {
  width: 1px;
  height: 6px;
  background: #555;
}
.sheet {
  height: 11px;
  margin-left: 2px;
  padding: 0 2px 0 1px;
  color: #111;
}
.sheet::after {
  content: "";
  width: 1px;
  height: 12px;
  margin-left: 5px;
  background: #555;
  transform: rotate(24deg);
}
.sheet.on::before {
  content: "";
  width: 1px;
  height: 12px;
  margin-right: 5px;
  background: #555;
  transform: rotate(-24deg);
}
.sheet.on {
  font-weight: 500;
}

/* command window */
.console {
  display: flex;
  flex: none;
  height: 50px;
  border-top: 3px solid #5f6061;
  background: #fff;
}
.grip {
  width: 10px;
  background: linear-gradient(#8a8a8a 0, #8a8a8a 2px, #666 3px, #8a8a8a 4px, #a2a2a2 6px);
}
.lines {
  display: flex;
  flex: 1;
  flex-direction: column;
}
.history {
  display: flex;
  justify-content: space-between;
  height: 34px;
  border-bottom: 1px solid #aaa;
}
.log p {
  height: 12px;
  margin: 0;
  padding-left: 2px;
  white-space: nowrap;
}
.log,
.prompt {
  font: 12px/12px "Noto Sans CJK SC", sans-serif;
  color: #222;
}
code {
  font: 9px/9px "Liberation Mono", monospace;
  white-space: pre;
}
.vbar {
  display: flex;
  flex-direction: column;
  justify-content: space-between;
  width: 12px;
  padding: 4px 3px;
  background: #f0f0f0;
}
.prompt {
  display: flex;
  align-items: center;
  height: 14px;
  padding-left: 2px;
}
.prompt input {
  flex: 1;
  min-width: 0;
  height: 12px;
  padding: 0 2px;
  border: 0;
  outline: 0;
  background: none;
  font: inherit;
}
.hbar {
  display: flex;
  align-items: center;
  align-self: stretch;
  width: 50px;
  margin-right: 13px;
  padding: 0 5px;
  gap: 4px;
  background: #f0f0f0;
}
.hbar button:last-child {
  margin-left: auto;
}
.thumb {
  width: 11px;
  height: 12px;
  border: 1px solid #aaa;
  background: linear-gradient(#f2f2f2, #cfcfcf);
}

/* watermark */
.mark {
  position: absolute;
  right: 51px;
  bottom: 19px;
  width: 184px;
  height: 90px;
  opacity: 0.9;
  pointer-events: none;
}
.bai {
  font: 700 38px "Liberation Sans", sans-serif;
}
.du {
  font: 700 24px "Liberation Sans", sans-serif;
}
.exp {
  font: 700 30px "Noto Sans CJK SC", sans-serif;
}
.url {
  font: 21px "Open Sans", sans-serif;
}
</style>
